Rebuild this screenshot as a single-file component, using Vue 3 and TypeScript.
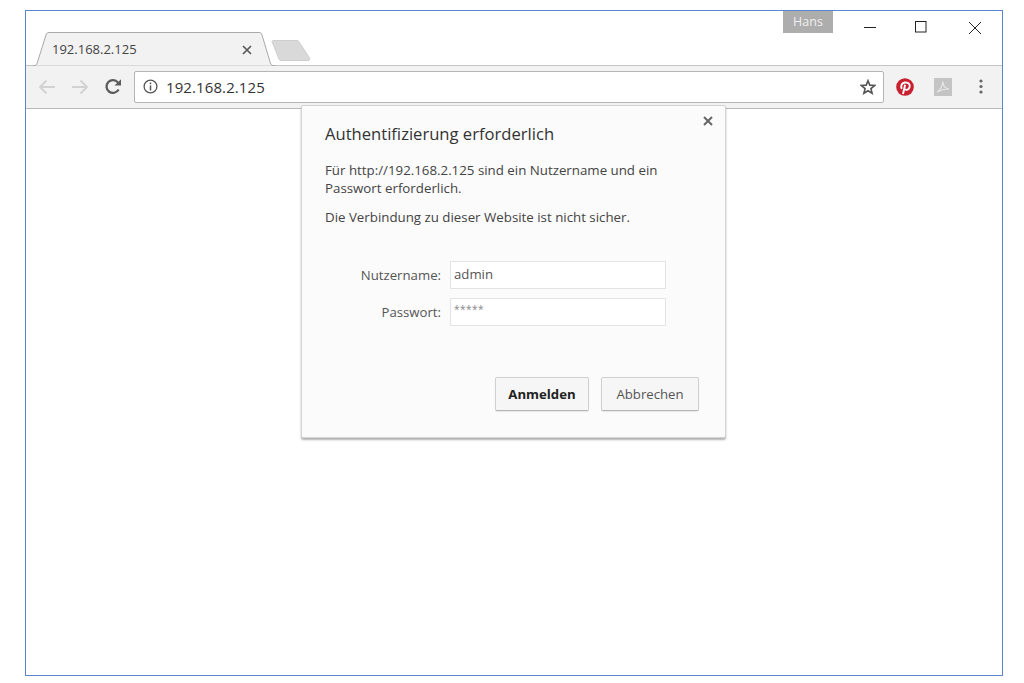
<template>
  <div class="window">
    <div class="tabstrip">
      <div class="tab">
        <svg class="tab-shape" width="242" height="34" viewBox="0 0 242 34">
          <path d="M0 33.5 H1.5 C3 33.5 3.6 32.6 4.2 31 L13 3 C13.6 1.2 14.6 .5 16 .5 H226 C227.6 .5 228.4 1.2 229 3 L237.4 31 C238 32.6 238.6 33.5 240 33.5 H242" fill="#f2f2f2" stroke="#a9a9a9" />
        </svg>
        <span class="tab-title">192.168.2.125</span>
        <svg class="tab-close" width="10" height="10" viewBox="0 0 10 10">
          <path d="M1 1 L9 9 M9 1 L1 9" stroke="#5a5a5a" stroke-width="1.7" />
        </svg>
      </div>
      <svg class="new-tab" width="40" height="21" viewBox="0 0 40 21">
        <path d="M1 1.5 C1 .8 1.5 .5 2.5 .5 H26 C27 .5 27.6 1 28 1.8 L38.6 18 C39.2 19.4 38.6 20.5 37 20.5 H10 C9 20.5 8.4 20 8 19 Z" fill="#d9d9d9" stroke="#cecece" />
      </svg>
      <div class="spacer"></div>
      <div class="user-badge">Hans</div>
      <div class="win-controls">
        <svg width="13" height="13" viewBox="0 0 13 13"><path d="M0 6.5 H12" stroke="#222" stroke-width="1" /></svg>
        <svg width="13" height="13" viewBox="0 0 13 13"><rect x=".5" y=".5" width="10.5" height="10.5" fill="none" stroke="#222" stroke-width="1" /></svg>
        <svg width="14" height="14" viewBox="0 0 14 14"><path d="M1 1 L13 13 M13 1 L1 13" stroke="#222" stroke-width="1" /></svg>
      </div>
    </div>

    <div class="toolbar">
      <svg class="nav" width="18" height="16" viewBox="0 0 18 16">
        <path d="M17 8 H2 M8.5 1.5 L2 8 L8.5 14.5" fill="none" stroke="#d2d2d2" stroke-width="1.8" />
      </svg>
      <svg class="nav" width="18" height="16" viewBox="0 0 18 16">
        <path d="M1 8 H16 M9.5 1.5 L16 8 L9.5 14.5" fill="none" stroke="#d2d2d2" stroke-width="1.8" />
      </svg>
      <svg class="nav" width="18" height="18" viewBox="0 0 18 18">
        <path d="M14.6 11.5 A6.4 6.4 0 1 1 14 4.6" fill="none" stroke="#5c5c5c" stroke-width="2.3" />
        <path d="M10.5 7.6 H17 V1.2 Z" fill="#5c5c5c" />
      </svg>
      <div class="omnibox">
        <svg width="15" height="15" viewBox="0 0 15 15">
          <circle cx="7.5" cy="7.5" r="6.4" fill="none" stroke="#555" stroke-width="1.3" />
          <path d="M7.5 6.5 V11.5 M7.5 3.6 V5.2" stroke="#555" stroke-width="1.5" />
        </svg>
        <span class="url">192.168.2.125</span>
        <svg class="star" width="16" height="16" viewBox="0 0 17 17">
          <path d="M8.5 1.8 L10.4 6.5 L15.6 6.9 L11.6 10.2 L12.9 15.2 L8.5 12.5 L4.1 15.2 L5.4 10.2 L1.4 6.9 L6.6 6.5 Z" fill="none" stroke="#555" stroke-width="1.7" />
        </svg>
      </div>
      <div class="extensions">
        <svg width="18" height="18" viewBox="0 0 18 18">
          <circle cx="9" cy="9" r="8.8" fill="#c9202f" />
          <path d="M6.1 10.8 C4.6 9.4 4.7 5.2 8.9 4.5 C12.6 4 14.2 6.6 13.6 9 C13 11.6 10.4 12.6 9 11.2 M9.1 6.8 L7 16" fill="none" stroke="#fff" stroke-width="1.9" />
        </svg>
        <svg width="18" height="18" viewBox="0 0 18 18">
          <rect width="18" height="18" fill="#c4c4c4" />
          <path d="M3 14 C6 12 8.5 8 8.8 3.5 C9 8 11 10.5 15 11 C11 10.8 7 12 3 14 Z" fill="none" stroke="#e6e6e6" stroke-width="1.2" />
        </svg>
        <svg class="dots" width="4" height="15" viewBox="0 0 4 15">
          <circle cx="2" cy="2" r="1.6" fill="#666" />
          <circle cx="2" cy="7.5" r="1.6" fill="#666" />
          <circle cx="2" cy="13" r="1.6" fill="#666" />
        </svg>
      </div>
    </div>

    <div class="page"></div>

    <div class="dialog">
      <svg class="dialog-close" width="10" height="10" viewBox="0 0 10 10">
        <path d="M1 1 L9 9 M9 1 L1 9" stroke="#666" stroke-width="2" />
      </svg>
      <h1 class="dialog-title">Authentifizierung erforderlich</h1>
      <p class="dialog-text first">Für http://192.168.2.125 sind ein Nutzername und ein<br />Passwort erforderlich.</p>
      <p class="dialog-text">Die Verbindung zu dieser Website ist nicht sicher.</p>
      <div class="form">
        <label>Nutzername:</label>
        <div class="field">admin</div>
        <label>Passwort:</label>
        <div class="field secret">*****</div>
      </div>
      <div class="actions">
        <button class="btn primary">Anmelden</button>
        <button class="btn">Abbrechen</button>
      </div>
    </div>
  </div>
</template>

<script setup lang="ts">
</script>

<style>
html, body {
  margin: 0;
  background: #fff;
}
</style>

<style scoped>
.window {
  position: relative;
  box-sizing: border-box;
  width: 978px;
  height: 666px;
  margin: 10px 0 0 25px;
  border: 1px solid #5b86cf;
  display: flex;
  flex-direction: column;
  font-family: "Open Sans", "Noto Sans", sans-serif;
  color: #333;
  overflow: hidden;
}
.tabstrip {
  height: 55px;
  box-sizing: border-box;
  border-bottom: 1px solid #c4c4c4;
  display: flex;
  align-items: flex-start;
  padding-left: 7px;
  flex: none;
}
.tab {
  position: relative;
  width: 242px;
  height: 34px;
  margin-top: 21px;
  flex: none;
}
.tab-shape {
  position: absolute;
  left: 0;
  top: 0;
}
.tab-title {
  position: absolute;
  left: 19px;
  top: 8px;
  font-size: 13px;
  color: #444;
}
.tab-close {
  position: absolute;
  left: 209px;
  top: 13px;
}
.new-tab {
  margin: 29px 0 0 -4px;
  flex: none;
}
.spacer {
  flex: 1;
}
.user-badge {
  width: 50px;
  height: 22px;
  background: #adadad;
  color: #f0f0f0;
  font-size: 12.5px;
  text-align: center;
  line-height: 22px;
  flex: none;
}
.win-controls {
  display: flex;
  gap: 39px;
  margin: 10px 20px 0 31px;
}
.win-controls svg:nth-child(2) {
  margin-left: -1px;
  margin-right: 1px;
}
.toolbar {
  height: 43px;
  box-sizing: border-box;
  background: #f2f2f2;
  border-bottom: 1px solid #bababa;
  display: flex;
  align-items: center;
  padding: 0 20px 1px 12px;
  flex: none;
}
.nav {
  margin-right: 15px;
  flex: none;
}
.omnibox {
  width: 750px;
  height: 32px;
  box-sizing: border-box;
  margin-left: -3px;
  background: #fff;
  border: 1px solid #b5b5b5;
  border-radius: 2px;
  display: flex;
  align-items: center;
  padding: 0 7px 0 8px;
  flex: none;
}
.url {
  margin-left: 8px;
  font-size: 15px;
  color: #333;
  letter-spacing: .1px;
}
.star {
  margin-left: auto;
}
.extensions {
  display: flex;
  align-items: center;
  margin-left: 12px;
  flex: none;
}
.extensions svg:nth-child(2) {
  margin-left: 20px;
}
.dots {
  margin-left: 27px;
}
.page {
  flex: 1;
  background: #fff;
}
.dialog {
  position: absolute;
  left: 275px;
  top: 94px;
  box-sizing: border-box;
  width: 425px;
  height: 333px;
  padding: 16px 23px 0;
  background: #fbfbfb;
  border: 1px solid #d4d4d4;
  border-radius: 2px;
  box-shadow: 0 2px 2px rgba(0, 0, 0, .3);
}
.dialog-close {
  position: absolute;
  right: 12px;
  top: 10px;
}
.dialog-title {
  margin: 0;
  font-size: 16.6px;
  line-height: 24px;
  font-weight: 400;
  color: #333;
}
.dialog-text {
  margin: 0;
  font-size: 13.3px;
  line-height: 18px;
  color: #444;
}
.dialog-text.first {
  margin: 15px 0 11px;
}
.form {
  display: grid;
  grid-template-columns: 116px 216px;
  column-gap: 9px;
  row-gap: 9px;
  align-items: center;
  margin-top: 35px;
  font-size: 13.2px;
}
.form label {
  text-align: right;
  color: #555;
}
.field {
  box-sizing: border-box;
  height: 28px;
  line-height: 25px;
  padding-left: 3px;
  background: #fff;
  border: 1px solid #e3e3e3;
  color: #555;
}
.field.secret {
  font-size: 10px;
  color: #888;
  line-height: 20px;
  letter-spacing: .5px;
}
.actions {
  display: flex;
  justify-content: flex-end;
  gap: 12px;
  margin: 51px 3px 0 0;
}
.btn {
  box-sizing: border-box;
  width: 98px;
  height: 34px;
  font-family: inherit;
  font-size: 13.2px;
  color: #555;
  background: #f6f6f6;
  border: 1px solid #cfcfcf;
  border-bottom-color: #b5b5b5;
  border-radius: 2px;
  box-shadow: 0 1px 1px rgba(0, 0, 0, .08);
  padding: 0;
}
.btn.primary {
  width: 94px;
  font-weight: 700;
  color: #222;
}
</style>
